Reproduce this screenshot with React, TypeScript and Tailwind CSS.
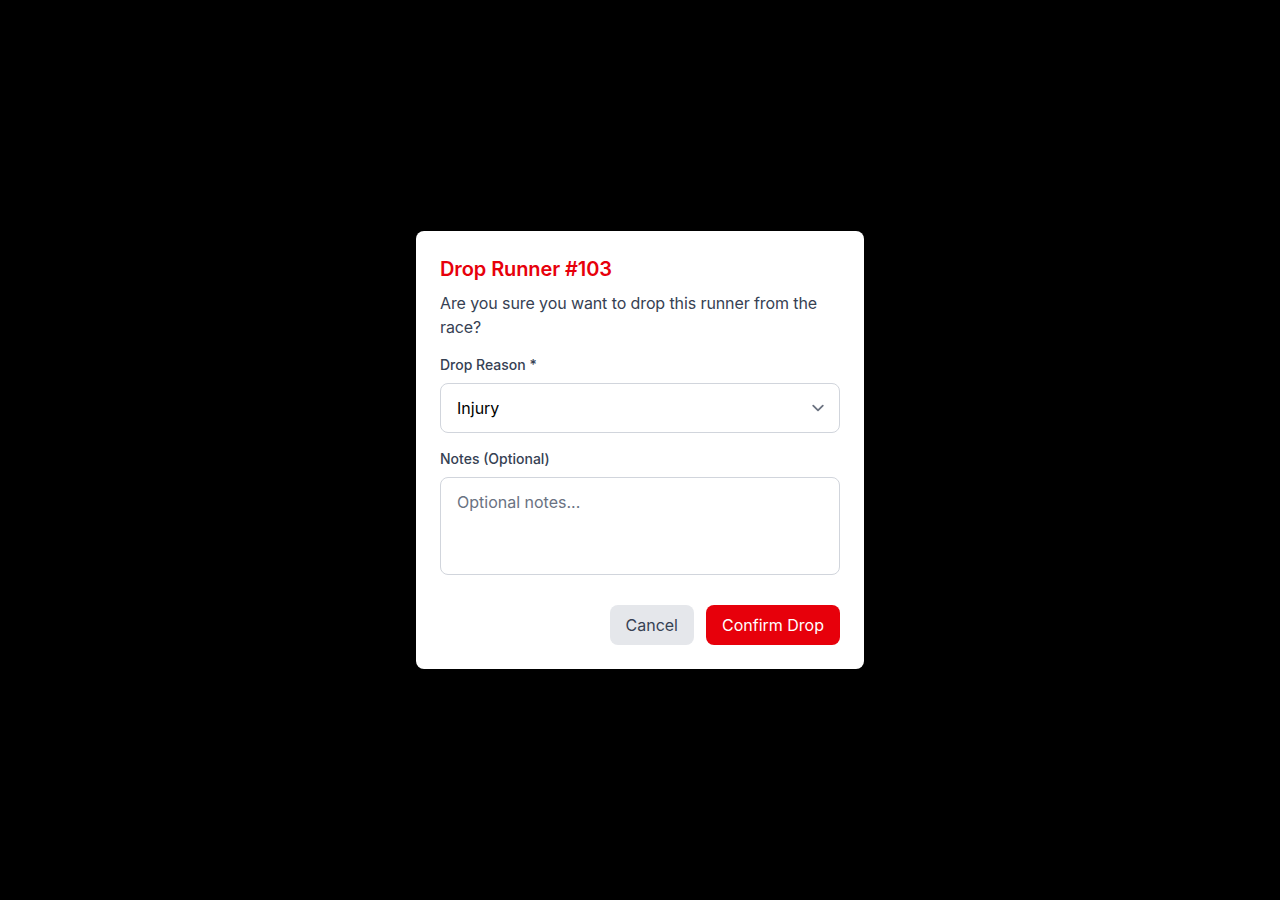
import React from 'react';

export default function App() {
  return (
    <div className="min-h-screen w-full bg-black flex items-center justify-center font-['Inter',sans-serif]">
      <div className="w-full max-w-md bg-white rounded-lg p-6">
        <h2 className="text-xl font-semibold text-[#e7000b] tracking-[-0.1px]">Drop Runner #103</h2>
        <p className="mt-2 text-base text-gray-700 tracking-[-0.1px]">Are you sure you want to drop this runner from the race?</p>

        <div className="mt-4">
          <label className="block text-sm font-medium text-gray-700 mb-2">Drop Reason *</label>
          <div className="relative">
            <select
              defaultValue="Injury"
              className="w-full appearance-none border border-gray-300 rounded-lg px-4 py-3 text-base text-black bg-white outline-none"
            >
              <option>Injury</option>
              <option>Illness</option>
              <option>Missed Cutoff</option>
              <option>Other</option>
            </select>
            <svg
              viewBox="0 0 20 20"
              fill="none"
              className="w-6 h-6 absolute right-[10px] top-1/2 -translate-y-1/2 pointer-events-none"
            >
              <path d="M6 8l4 4 4-4" stroke="#6b7280" strokeWidth="1.5" strokeLinecap="round" strokeLinejoin="round" />
            </svg>
          </div>
        </div>

        <div className="mt-4">
          <label className="block text-sm font-medium text-gray-700 mb-2">Notes (Optional)</label>
          <textarea
            rows={3}
            placeholder="Optional notes..."
            className="w-full border border-gray-300 rounded-lg px-4 py-3 text-base resize-none outline-none placeholder:text-gray-500"
          />
        </div>

        <div className="mt-6 flex justify-end gap-3">
          <button className="px-4 py-2 rounded-lg bg-gray-200 text-gray-700 text-base">Cancel</button>
          <button className="px-4 py-2 rounded-lg bg-[#e7000b] text-white text-base">Confirm Drop</button>
        </div>
      </div>
    </div>
  );
}
